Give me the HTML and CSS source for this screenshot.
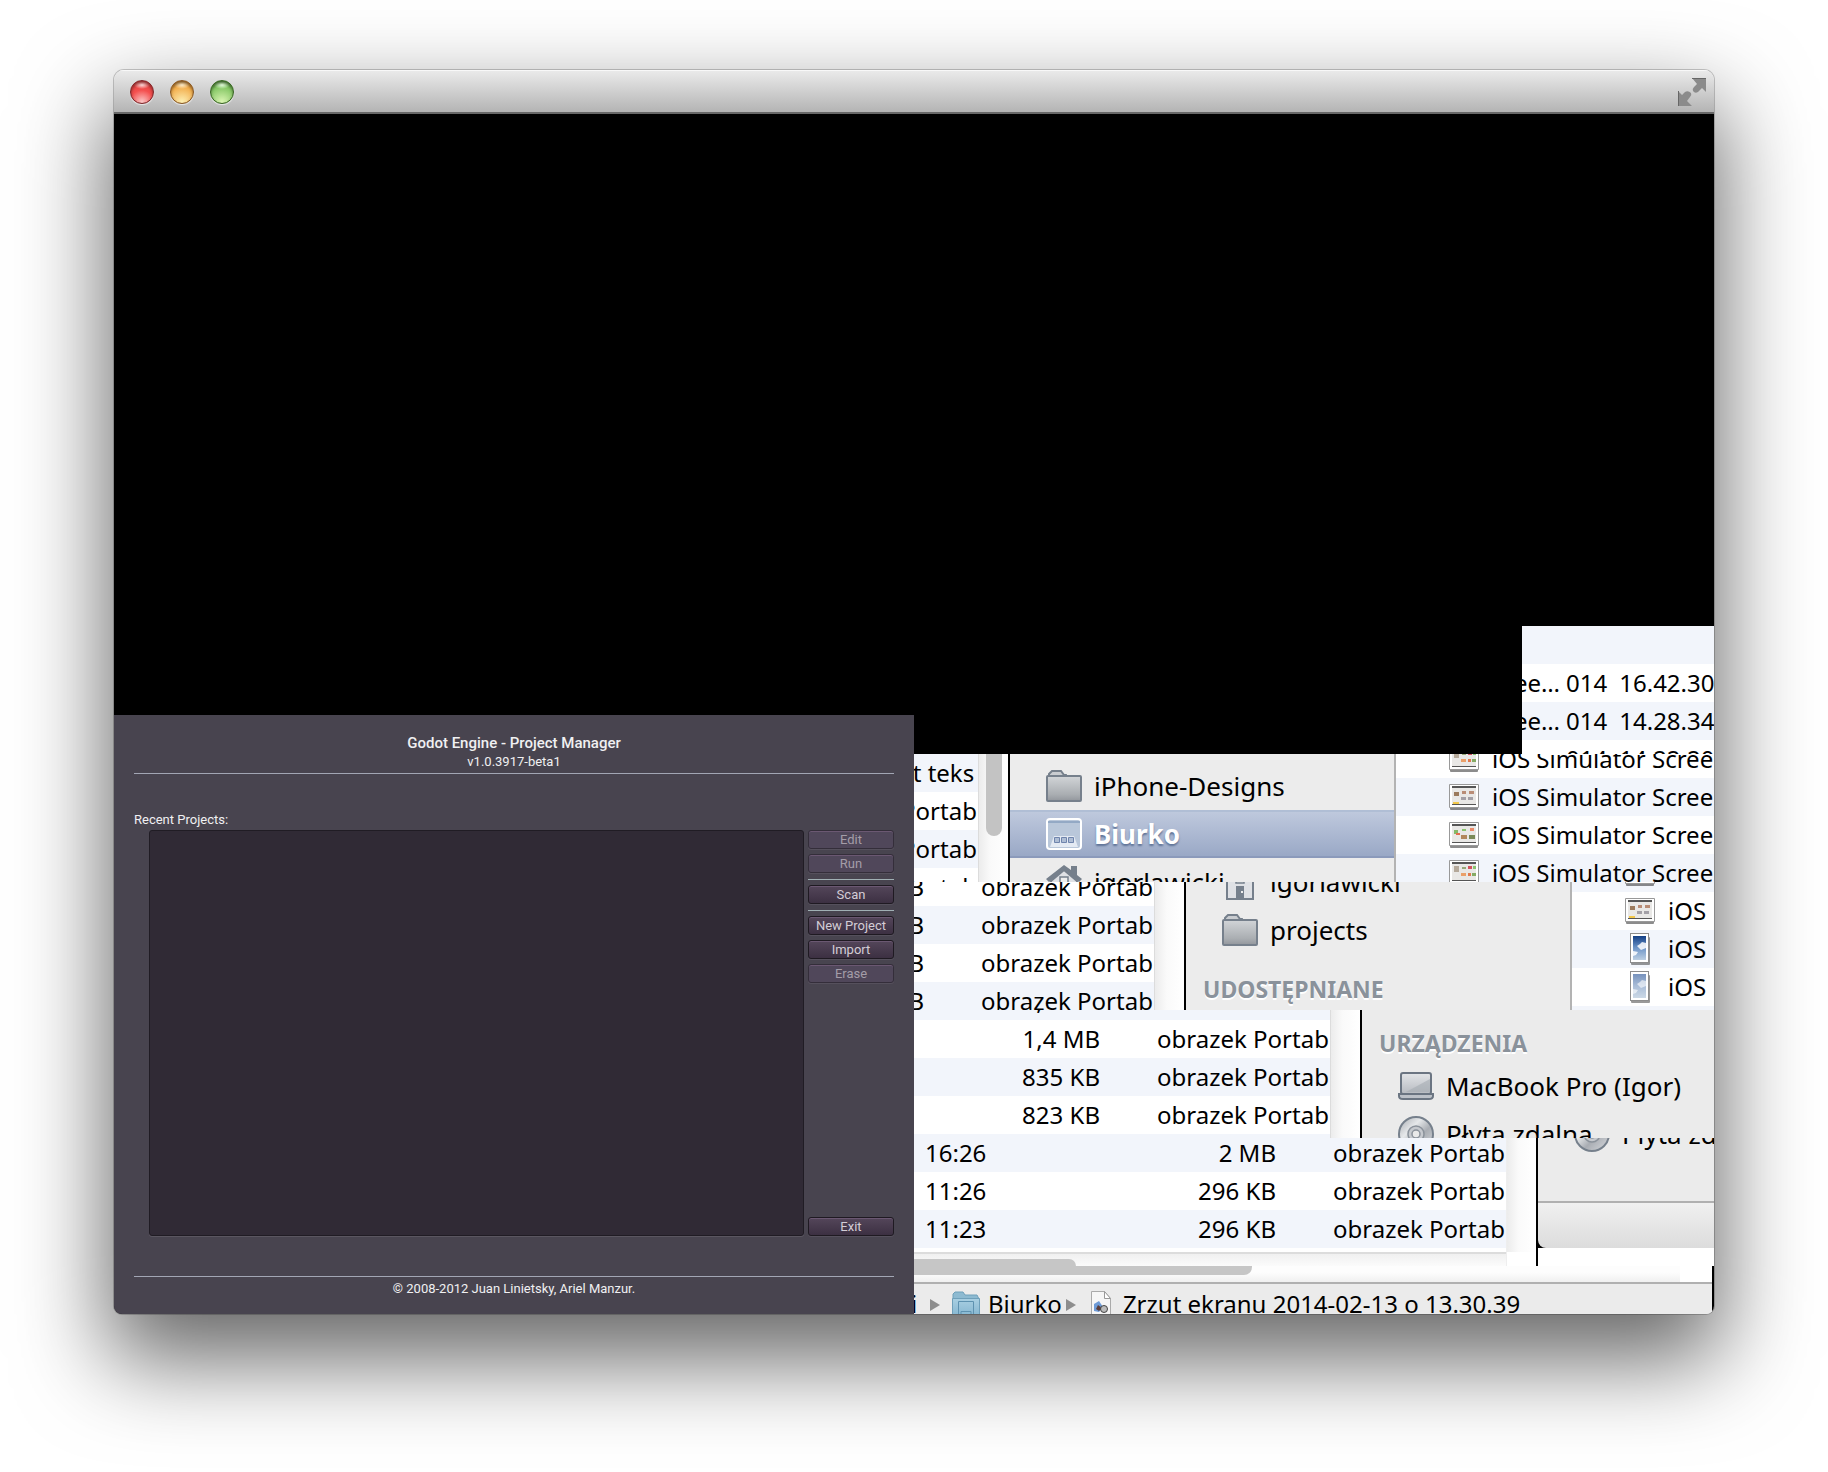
FILE: index.html
```html
<!DOCTYPE html>
<html lang="pl">
<head>
<meta charset="utf-8">
<title>Godot Engine - Project Manager</title>
<link rel="stylesheet" href="styles.css">
</head>
<body>
<svg class="defs" width="0" height="0" aria-hidden="true">
  <defs>
    <linearGradient id="steel" x1="0" y1="0" x2="0" y2="1"><stop offset="0" stop-color="#d2d5d8"/><stop offset=".75" stop-color="#a9adb1"/><stop offset="1" stop-color="#92969c"/></linearGradient>
    <linearGradient id="pale" x1="0" y1="0" x2="0" y2="1"><stop offset="0" stop-color="#e3e5e8"/><stop offset="1" stop-color="#b6bac0"/></linearGradient>
    <linearGradient id="disc" x1="0" y1="0" x2="1" y2="1"><stop offset="0" stop-color="#a4a8ae"/><stop offset=".35" stop-color="#e6e8ea"/><stop offset=".6" stop-color="#a9adb3"/><stop offset="1" stop-color="#d8dade"/></linearGradient>
    <linearGradient id="sky" x1="0" y1="0" x2="0" y2="1"><stop offset="0" stop-color="#123f86"/><stop offset=".5" stop-color="#6f96c8"/><stop offset="1" stop-color="#bccfe2"/></linearGradient>
    <linearGradient id="haze" x1="0" y1="0" x2="0" y2="1"><stop offset="0" stop-color="#7792bd"/><stop offset=".5" stop-color="#a9bdd8"/><stop offset="1" stop-color="#ccd9e6"/></linearGradient>
    <linearGradient id="aqua" x1="0" y1="0" x2="0" y2="1"><stop offset="0" stop-color="#a9cfe2"/><stop offset="1" stop-color="#7fb2cd"/></linearGradient>
    <symbol id="folder" viewBox="0 0 36 32">
      <path d="M3 8V4l3-3h9l3 4h2l1 3" fill="#c9ccd0" stroke="#76808c" stroke-width="2"/>
      <rect x="1" y="6" width="34" height="25" rx="1" fill="url(#steel)" stroke="#76808c" stroke-width="2"/>
    </symbol>
    <symbol id="desktop" viewBox="0 0 36 32">
      <rect x="1" y="1" width="34" height="30" rx="3" fill="#b9c7da" stroke="#fff" stroke-width="2"/>
      <path d="M2 4h32" stroke="#6f8bb0" stroke-width="1"/>
      <path d="M8 18h20l4 11H4z" fill="#e4eaf3"/>
      <path d="M8.500 19.500h5v5h-5zM15.500 19.500h5v5h-5zM22.500 19.500h5v5h-5z" fill="#aebdd4" stroke="#6f84ad"/>
    </symbol>
    <symbol id="home" viewBox="0 0 36 36">
      <path d="M5 17v18h26V17L18 6z" fill="#dfe1e5" stroke="#76808c" stroke-width="2"/>
      <path d="M0 15L18 1l7 5V2h6v9l5 4-3 3L18 6 3 18z" fill="#76808c"/>
      <path d="M14 13h8v6h-8z" fill="#eee" stroke="#76808c" stroke-width="1.500"/>
      <path d="M14 22h8v12h-8z" fill="#76808c"/><path d="M19 27h2v2h-2z" fill="#eee"/>
    </symbol>
    <symbol id="laptop" viewBox="0 0 36 28">
      <rect x="3" y="1" width="30" height="21" rx="2" fill="url(#pale)" stroke="#6b7582" stroke-width="2"/>
      <path d="M32 7L8 20h24z" fill="#a5abb2" opacity=".6"/>
      <path d="M1 22h34v2q0 3-4 3H5q-4 0-4-3z" fill="#bcc1c8" stroke="#6b7582" stroke-width="2"/>
    </symbol>
    <symbol id="cd" viewBox="0 0 36 36">
      <circle cx="18" cy="18" r="17" fill="url(#disc)" stroke="#76808c" stroke-width="2"/>
      <circle cx="18" cy="18" r="8" fill="#c6c9ce" stroke="#8b929b" stroke-width="1.500"/>
      <circle cx="18" cy="18" r="4" fill="#e9e9e9" stroke="#8b929b" stroke-width="1.500"/>
    </symbol>
    <symbol id="shot-a" viewBox="0 0 30 26">
      <rect x="1" y="3" width="28" height="23" rx="1" fill="#000" opacity=".45"/>
      <rect x="0" y="0" width="30" height="24" rx="1" fill="#999"/><rect x="1" y="1" width="28" height="22" fill="#fff"/>
      <path d="M3 3h24v18H3z" fill="#e9e8e6"/><path d="M3 2h24v2H3zM3 20h24v1H3z" fill="#555"/>
      <path d="M5 8h5v4H5z" fill="#9b7a5c"/><path d="M13 7h4v3h-4zM20 7h5v3h-5z" fill="#b98d76"/>
      <path d="M12 13h5v3h-5zM19 13h5v3h-5z" fill="#a3a0a6"/><path d="M4 18h6v2H4z" fill="#f2c84b"/>
    </symbol>
    <symbol id="shot-b" viewBox="0 0 30 26">
      <rect x="1" y="3" width="28" height="23" rx="1" fill="#000" opacity=".45"/>
      <rect x="0" y="0" width="30" height="24" rx="1" fill="#999"/><rect x="1" y="1" width="28" height="22" fill="#fff"/>
      <path d="M3 3h24v18H3z" fill="#e9e8e6"/><path d="M3 2h24v2H3zM3 20h24v1H3z" fill="#555"/>
      <path d="M5 8h4v4H5z" fill="#86b968"/><path d="M7 11h4v2H7z" fill="#e36f4f"/><path d="M13 7h4v2h-4z" fill="#8ac46e"/><path d="M21 6h4v3h-4z" fill="#ec8a68"/>
      <path d="M12 13h6v4h-6z" fill="#b2875c"/><path d="M20 13h6v4h-6z" fill="#7a8a58"/>
    </symbol>
    <symbol id="shot-c" viewBox="0 0 30 26">
      <rect x="1" y="3" width="28" height="23" rx="1" fill="#000" opacity=".45"/>
      <rect x="0" y="0" width="30" height="24" rx="1" fill="#999"/><rect x="1" y="1" width="28" height="22" fill="#fff"/>
      <path d="M3 3h24v18H3z" fill="#e9e8e6"/><path d="M3 2h24v2H3zM3 20h24v1H3z" fill="#555"/>
      <path d="M5 6h5v6H5z" fill="#b5a99a"/><path d="M13 7h4v2h-4z" fill="#97a878"/><path d="M19 6h4v3h-4z" fill="#d4525e"/><path d="M24 6h3v3h-3z" fill="#8ac46e"/>
      <path d="M12 13h5v3h-5z" fill="#eaa069"/><path d="M19 13h3v3h-3z" fill="#e0794e"/><path d="M23 13h4v3h-4z" fill="#86ab64"/>
    </symbol>
    <symbol id="phone-a" viewBox="0 0 30 32">
      <rect x="6" y="4" width="19" height="28" rx="1" fill="#000" opacity=".4"/>
      <rect x="5" y="0" width="19" height="30" fill="#8d8d8d"/><rect x="6" y="1" width="17" height="28" fill="#fff"/>
      <path d="M8 3h13v24H8z" fill="url(#sky)"/><path d="M12 13l3-2 2-2 4 1v5l-5 2zM8 18l5 1-2 3-3 1z" fill="#fff" opacity=".85"/>
    </symbol>
    <symbol id="phone-b" viewBox="0 0 30 32">
      <rect x="6" y="4" width="19" height="28" rx="1" fill="#000" opacity=".4"/>
      <rect x="5" y="0" width="19" height="30" fill="#8d8d8d"/><rect x="6" y="1" width="17" height="28" fill="#fff"/>
      <path d="M8 3h13v24H8z" fill="url(#haze)"/><path d="M12 13l3-2 2-2 4 1v5l-5 2zM8 18l5 1-2 3-3 1z" fill="#fff" opacity=".6"/>
    </symbol>
  </defs>
</svg>

<main class="window">
  <header class="titlebar">
    <button class="light red" aria-label="Close"></button>
    <button class="light amber" aria-label="Minimise"></button>
    <button class="light green" aria-label="Zoom"></button>
    <button class="fullscreen" aria-label="Full screen">
      <svg viewBox="0 0 28 28" width="28" height="28"><path d="M14 0h14v14l-4-4-4 4q-3 2-5-1-1-2 1-4l3-3zM0 28V13l4 4 3-3q3-2 6 1 1 2-1 4l-3 4 5 5z" fill="#8b8b8b"/><path d="M14 0.500h14M0.500 28V13" stroke="#666" fill="none"/></svg>
    </button>
  </header>

  <div class="content">
    <section class="left">
      <div class="godot">
        <h1>Godot Engine - Project Manager</h1>
        <p class="version">v1.0.3917-beta1</p>
        <hr>
        <h2 id="recent">Recent Projects:</h2>
        <div class="manager">
          <div class="projects" role="listbox" aria-labelledby="recent" tabindex="0"></div>
          <div class="actions">
            <button disabled>Edit</button>
            <button disabled>Run</button>
            <hr>
            <button>Scan</button>
            <hr>
            <button>New Project</button>
            <button>Import</button>
            <button disabled>Erase</button>
            <button class="exit">Exit</button>
          </div>
        </div>
        <hr class="foot">
        <p class="copyright">© 2008-2012 Juan Linietsky, Ariel Manzur.</p>
      </div>
    </section>

    <section class="right">
      <div class="band band-a">
        <ul class="list bare">
          <li></li>
          <li><span>ee…</span><span>014</span><span>16.42.30</span></li>
          <li><span>ee…</span><span>014</span><span>14.28.34</span></li>
          <li><span>ee…</span><span>014</span><span>14.22.20</span></li>
        </ul>
      </div>

      <div class="band band-b">
        <div class="files"><table>
          <tr class="odd"><td></td><td></td><td>dokument teks</td></tr>
          <tr><td></td><td></td><td>obrazek Portab</td></tr>
          <tr class="odd"><td></td><td></td><td>obrazek Portab</td></tr>
          <tr><td></td><td></td><td>obrazek Portab</td></tr>
        </table></div>
        <div class="gutter"><div class="thumb"></div></div>
        <nav class="side">
          <a href="#"><svg width="36" height="32"><use href="#folder"/></svg>iPhone-Designs</a>
          <a href="#" class="selected"><svg width="36" height="32"><use href="#desktop"/></svg>Biurko</a>
          <a href="#"><svg width="36" height="36"><use href="#home"/></svg>igorlawicki</a>
        </nav>
        <ul class="list">
          <li><svg width="30" height="26"><use href="#shot-c"/></svg>iOS Simulator Scree</li>
          <li><svg width="30" height="26"><use href="#shot-a"/></svg>iOS Simulator Scree</li>
          <li><svg width="30" height="26"><use href="#shot-b"/></svg>iOS Simulator Scree</li>
          <li><svg width="30" height="26"><use href="#shot-c"/></svg>iOS Simulator Scree</li>
        </ul>
      </div>

      <div class="band band-c">
        <div class="files"><table>
          <tr><td></td><td>KB</td><td>obrazek Portab</td></tr>
          <tr class="odd"><td></td><td>KB</td><td>obrazek Portab</td></tr>
          <tr><td></td><td>KB</td><td>obrazek Portab</td></tr>
          <tr class="odd"><td></td><td>MB</td><td>obrazek Portab</td></tr>
        </table></div>
        <div class="gutter"></div>
        <nav class="side">
          <a href="#"><svg width="36" height="36"><use href="#home"/></svg>igorlawicki</a>
          <a href="#"><svg width="36" height="32"><use href="#folder"/></svg>projects</a>
          <h3>UDOSTĘPNIANE</h3>
        </nav>
        <ul class="list">
          <li><svg width="30" height="26"><use href="#shot-c"/></svg>iOS</li>
          <li><svg width="30" height="26"><use href="#shot-a"/></svg>iOS</li>
          <li><svg width="30" height="32"><use href="#phone-a"/></svg>iOS</li>
          <li><svg width="30" height="32"><use href="#phone-b"/></svg>iOS</li>
          <li></li>
        </ul>
      </div>

      <div class="band band-d">
        <div class="files"><table>
          <tr class="odd"><td></td><td>1,6 MB</td><td></td></tr>
          <tr><td></td><td>1,4 MB</td><td>obrazek Portab</td></tr>
          <tr class="odd"><td></td><td>835 KB</td><td>obrazek Portab</td></tr>
          <tr><td></td><td>823 KB</td><td>obrazek Portab</td></tr>
          <tr class="odd"><td></td><td></td><td></td></tr>
        </table></div>
        <div class="gutter"></div>
        <nav class="side">
          <h3>URZĄDZENIA</h3>
          <a href="#"><svg width="36" height="28"><use href="#laptop"/></svg>MacBook Pro (Igor)</a>
          <a href="#"><svg width="36" height="36"><use href="#cd"/></svg>Płyta zdalna</a>
        </nav>
      </div>

      <div class="band band-e">
        <div class="stack">
          <div class="files"><table>
            <tr class="odd"><td>16:26</td><td>2 MB</td><td>obrazek Portab</td></tr>
            <tr><td>11:26</td><td>296 KB</td><td>obrazek Portab</td></tr>
            <tr class="odd"><td>11:23</td><td>296 KB</td><td>obrazek Portab</td></tr>
            <tr><td></td><td></td><td></td></tr>
          </table></div>
          <div class="track upper"><div class="bar"></div></div>
        </div>
        <div class="gutter"></div>
        <nav class="side">
          <div class="places"><a href="#"><svg width="36" height="36"><use href="#cd"/></svg>Płyta zdalna</a></div>
          <div class="statusbar"></div>
        </nav>
      </div>

      <div class="band-f">
        <div class="track lower"><div class="bar"></div></div>
        <div class="pathbar">
          <span>i</span>
          <svg class="arrow" width="10" height="12"><path d="M0 0l10 6-10 6z" fill="#8d8d8d"/></svg>
          <svg class="crumb" width="28" height="28" viewBox="0 0 28 28"><path d="M1 8V3l2-2h8l2 3h12l2 4v20H1z" fill="#8dbad1" stroke="#6fa0ba"/><path d="M.5 7.500h27V28H.5z" fill="url(#aqua)" stroke="#6fa0ba"/><path d="M6.500 10.500h15v13h-15zM9 20.500h10v3H9z" fill="none" stroke="#5e92b0"/></svg>
          <span>Biurko</span>
          <svg class="arrow" width="10" height="12"><path d="M0 0l10 6-10 6z" fill="#8d8d8d"/></svg>
          <svg class="crumb" width="20" height="28" viewBox="0 0 20 28"><path d="M.5.5h13l6 7V28H.5z" fill="#f6f6f6" stroke="#aaa"/><path d="M13.500.5v7h6z" fill="#fff" stroke="#999"/><path d="M3 13l5-3 4 6-4 5-5-1z" fill="#6d9ad6"/><path d="M7 14l4 3-3 3-3-2z" fill="#5b3d38"/><circle cx="13" cy="18" r="3.500" fill="#bbb" stroke="#444"/></svg>
          <span>Zrzut ekranu 2014-02-13 o 13.30.39</span>
        </div>
      </div>
    </section>
  </div>
</main>
</body>
</html>
```
FILE: styles.css
```css
* { box-sizing: border-box; margin: 0; padding: 0; }

body {
  min-height: 100vh;
  display: flex;
  padding: 70px 114px 158px;
  background: #fff;
  font: 24px/38px "Noto Sans", sans-serif;
  color: #000;
}

svg { flex: none; }
.defs { position: absolute; }

.window {
  flex: 1;
  min-width: 0;
  display: flex;
  flex-direction: column;
  border-radius: 10px 10px 8px 8px;
  box-shadow: 0 0 0 1px rgba(0, 0, 0, .2), 0 40px 90px 6px rgba(0, 0, 0, .6);
  overflow: hidden;
}

.titlebar {
  height: 44px;
  display: flex;
  align-items: center;
  gap: 16px;
  padding: 2px 8px 0 16px;
  background: linear-gradient(#ebebeb, #b4b4b4);
  border-bottom: 2px solid #686868;
  box-shadow: inset 0 1px #f8f8f8;
}

.light {
  width: 24px;
  height: 24px;
  border: 1px solid;
  border-radius: 50%;
  box-shadow: 0 1px 1px rgba(255, 255, 255, .7), inset 0 2px 3px rgba(0, 0, 0, .4);
}
.red { border-color: #7d2427; background: radial-gradient(ellipse 8px 4px at 50% 18%, #fdd, transparent), radial-gradient(circle at 50% 95%, #fbc8c8, #f4504f 50%, #d83a3b); }
.amber { border-color: #875520; background: radial-gradient(ellipse 8px 4px at 50% 18%, #fff0d0, transparent), radial-gradient(circle at 50% 95%, #fdf0b4, #f2ac4a 65%, #b06c20); }
.green { border-color: #35641f; background: radial-gradient(ellipse 8px 4px at 50% 18%, #e8ffe0, transparent), radial-gradient(circle at 50% 95%, #dcf6b4, #82c562 65%, #427e2a); }

.fullscreen { margin-left: auto; border: 0; background: none; line-height: 0; }

.content { flex: 1; display: grid; grid-template-columns: 1fr 1fr; background: #000; }
.left, .right { min-width: 0; display: flex; flex-direction: column; justify-content: flex-end; }

/* Project manager */
.godot {
  display: flex;
  flex-direction: column;
  padding: 18px 20px 17px;
  background: #48444f;
  color: #f0f0f2;
  font: 13px/16px Roboto, sans-serif;
}
.godot h1 { font-size: 15px; line-height: 20px; font-weight: 500; text-align: center; }
.godot hr { border: 0; border-top: 1px solid #a2a6b4; }
.version { padding: 1px 0 3px; text-align: center; }
.godot h2 { padding: 38px 0 2px; font-size: 13px; line-height: 16px; font-weight: 400; }
.manager { display: flex; gap: 4px; padding-left: 15px; }
.projects {
  flex: 1;
  min-height: 406px;
  background: #302a35;
  border: 1px solid #201c24;
  border-radius: 3px;
  box-shadow: 0 1px #5a5660;
}
.actions { width: 86px; display: flex; flex-direction: column; gap: 5px; }
.actions hr { margin-top: 1px; border-color: #a0b0b4; }
.actions button {
  height: 19px;
  border: 1px solid #1f1a22;
  border-radius: 3px;
  background: linear-gradient(#54465a, #3c3042);
  box-shadow: inset 0 1px #6b5872, 0 1px #55505c;
  color: #d3cdd6;
  font: 13px/16px Roboto, sans-serif;
}
.actions button:disabled { border-color: #342e3a; background: #50475a; color: #a49da8; }
.actions .exit { margin-top: auto; }
.foot { margin-top: 40px; }
.copyright { padding-top: 4px; text-align: center; }

/* Finder slices */
.band { height: 128px; display: flex; overflow: hidden; white-space: nowrap; }

.files { flex: none; display: flex; justify-content: flex-end; overflow: hidden; background: #fff; }
table { flex: none; width: 592px; table-layout: fixed; border-collapse: collapse; align-self: flex-start; }
td { height: 38px; overflow: hidden; }
td:nth-child(1) { width: 212px; padding-left: 11px; }
td:nth-child(2) { width: 150px; text-align: right; }
td:nth-child(3) { width: 230px; padding-left: 57px; }
.odd { background: #f2f5fb; }

.gutter {
  flex: none;
  width: 32px;
  padding: 0 6px 0 7px;
  border-left: 1px solid #dcdcdc;
  border-right: 2px solid #000;
  background: linear-gradient(90deg, #ececec, #fafafa 40%, #fff);
}
.thumb { height: 82px; background: #c3c3c3; border-radius: 0 0 8px 8px; }

.side { flex: none; width: 386px; background: #ececec; border-right: 2px solid #b3b3b3; font-size: 26px; }
.side a {
  height: 48px;
  display: flex;
  align-items: center;
  gap: 12px;
  padding-left: 36px;
  color: #000;
  text-decoration: none;
}
.side h3 {
  padding: 16px 0 0 17px;
  color: #8a929b;
  font-size: 23px;
  line-height: 38px;
  font-weight: 700;
  text-shadow: 0 2px #fff;
}
.side .selected {
  background: linear-gradient(#c0cade, #98a7c5);
  box-shadow: inset 0 2px #b0bed5, inset 0 -2px #8b9abb;
  color: #fff;
  font-weight: 700;
  text-shadow: 0 2px 2px #5f7397;
}

.list { flex: 1; min-width: 0; list-style: none; background: #fff; overflow: hidden; }
.list li { height: 38px; display: flex; align-items: center; gap: 13px; padding-left: 53px; }

.band-a .list { flex: none; width: 24%; margin-left: auto; }
.band-a .list li { gap: 6px; padding-left: 0; }
.band-a span:first-child { margin-left: -8px; }
.band-a span:last-child { padding-left: 6px; }
.band-a li:nth-child(odd), .band-b li:nth-child(even), .band-c li:nth-child(odd) { background: #f2f5fb; }

.band-b .files { width: 64px; }
.band-b .side { padding-top: 8px; }
.band-b .list li:first-child { margin-top: -14px; }

.band-c .files { width: 240px; }
.band-c table { margin-top: -14px; }
.band-c .side a:first-child { margin-top: -24px; }
.band-c .list li:first-child { margin-top: -28px; }

.band-d .files { width: 416px; }
.band-d table { margin-top: -28px; }
.band-d .side, .band-e .side { flex: 1; min-width: 0; border-right: 0; background: #ebebeb; overflow: hidden; }
.band-d .side h3 { padding-top: 14px; }

.band-e { background: #fff; }
.stack { flex: none; width: 592px; display: flex; flex-direction: column; }
.band-e .files { height: 114px; }
.band-e table { margin-top: -4px; }
.band-e .gutter { background-size: 100% 114px; background-repeat: no-repeat; background-color: #fff; border-left-color: #eee; }
.band-e .side { display: flex; flex-direction: column; background: #000; }
.places { height: 63px; background: #ebebeb; }
.places a { margin-top: -28px; }
.statusbar { height: 47px; border-top: 2px solid #b0b0b0; border-radius: 0 0 0 8px; background: linear-gradient(#f0f0f0, #dcdcdc); }
.band-e .side::after { content: ""; flex: 1; background: #fff; }

.track { display: flex; overflow: hidden; }
.track .bar { background: #c6c6c6; }
.upper { height: 14px; padding-top: 5px; border-top: 2px solid #dcdcdc; background: linear-gradient(#f0f0f0, #fbfbfb); }
.upper .bar { width: 162px; border-radius: 0 8px 0 0; }
.lower { height: 16px; padding-bottom: 7px; margin-right: 32px; background: linear-gradient(#fdfdfd 40%, #f0f0f0); }
.lower .bar { width: 338px; border-radius: 0 0 8px 0; }
.band-f { height: 48px; background: #fff; border-right: 2px solid #000; }
.pathbar {
  height: 32px;
  display: flex;
  align-items: flex-start;
  overflow: hidden;
  border-top: 2px solid #b0b0b0;
  background: #ebebeb;
  line-height: 40px;
  white-space: nowrap;
}
.pathbar span:first-child { width: 16px; text-indent: -3px; }
.arrow { margin-top: 15px; }
.crumb { margin: 7px 8px 0 12px; }
.pathbar span + .arrow:nth-child(5) { margin-left: 4px; }
.pathbar .crumb:nth-child(6) { margin: 7px 12px 0 15px; }
```
